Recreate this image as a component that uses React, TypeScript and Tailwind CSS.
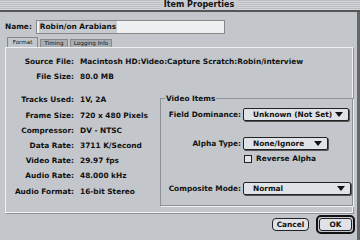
import React from "react";

const Popup: React.FC<{ value: string; w: string }> = ({ value, w }) => (
  <div
    className={`${w} h-[13px] flex items-center justify-between whitespace-nowrap bg-[#dfe2e6] border border-[#222] rounded-[2px] shadow-[1px_1px_0_#555] pl-[9px] pr-[5px]`}
  >
    <span>{value}</span>
    <svg width="8" height="5" viewBox="0 0 8 5">
      <path d="M0 0 L8 0 L4 5 Z" fill="#111" />
    </svg>
  </div>
);

const Row: React.FC<{ label: string; value: string; mt?: string }> = ({ label, value, mt }) => (
  <div className={`flex items-center h-[15.2px] whitespace-nowrap ${mt ?? ""}`}>
    <div className="w-[68px] text-right">{label}</div>
    <div className="ml-[6px]">{value}</div>
  </div>
);

const App: React.FC = () => {
  return (
    <div
      className="w-[360px] h-[240px] bg-[#c3c7cc] text-[#111] text-[7.4px] font-bold overflow-hidden relative"
      style={{ fontFamily: '"DejaVu Sans", "Liberation Sans", sans-serif' }}
    >
      {/* title bar */}
      <div className="h-[12px] flex items-center justify-center pl-[38px] bg-[repeating-linear-gradient(#b9bdc2_0px,#b9bdc2_1px,#d3d6da_1px,#d3d6da_2px)] border-b-2 border-[#555]">
        <span className="bg-[#c8ccd0] px-[4px] text-[8px] leading-[10px]">Item Properties</span>
      </div>

      <div className="flex h-[228px] border-r-[3px] border-[#666]">
        <div className="flex-1 flex flex-col">
          {/* name */}
          <div className="flex items-center mt-[8px] ml-[5px]">
            <span>Name:</span>
            <div className="ml-[4px] w-[189px] h-[14px] bg-[#eef0f2] border border-[#888] flex items-center pl-[2px]">
              <span className="bg-[#c7cbd0] px-[1px]">Robin/on Arabians</span>
            </div>
          </div>

          {/* tabs */}
          <div className="flex items-end mt-[3px] ml-[7px] h-[10px] font-normal text-[5.6px]">
            <div className="h-[10px] w-[31px] bg-[#c3c7cc] border border-b-0 border-[#888] flex items-center justify-center">Format</div>
            <div className="h-[8px] w-[28px] ml-[2px] bg-[#a9adb2] border border-b-0 border-[#888] flex items-center justify-center">Timing</div>
            <div className="h-[8px] w-[42px] ml-[2px] bg-[#a9adb2] border border-b-0 border-[#888] flex items-center justify-center">Logging Info</div>
          </div>

          {/* panel */}
          <div className="ml-[5px] mr-[3px] h-[167px] border border-[#8e9298] border-t-[#eef0f2] border-l-[#eef0f2] shadow-[inset_-1px_-1px_0_#f0f2f4] flex">
            <div className="flex flex-col pt-[6px]">
              <Row label="Source File:" value="Macintosh HD:Video:Capture Scratch:Robin/interview" />
              <Row label="File Size:" value="80.0 MB" />
              <Row label="Tracks Used:" value="1V, 2A" mt="mt-[8px]" />
              <Row label="Frame Size:" value="720 x 480 Pixels" />
              <Row label="Compressor:" value="DV - NTSC" />
              <Row label="Data Rate:" value="3711 K/Second" />
              <Row label="Video Rate:" value="29.97 fps" />
              <Row label="Audio Rate:" value="48.000 kHz" />
              <Row label="Audio Format:" value="16-bit Stereo" />
            </div>
          </div>
        </div>
      </div>

      {/* video items group */}
      <div className="absolute left-[160px] top-[98px] w-[193px] h-[108px] border border-[#8e9298] shadow-[1px_1px_0_#eef0f2] whitespace-nowrap">
        <span className="absolute left-[4px] -top-[6px] bg-[#c3c7cc] px-[1px]">Video Items</span>
        <div className="flex items-center mt-[9px]">
          <div className="w-[80px] text-right">Field Dominance:</div>
          <div className="ml-[2px]"><Popup value="Unknown (Not Set)" w="w-[106px]" /></div>
        </div>
        <div className="flex items-center mt-[16px]">
          <div className="w-[80px] text-right">Alpha Type:</div>
          <div className="ml-[2px]"><Popup value="None/Ignore" w="w-[85px]" /></div>
        </div>
        <div className="flex items-center mt-[3px] ml-[83px]">
          <div className="w-[8px] h-[8px] border border-[#222] bg-[#dfe2e6]" />
          <span className="ml-[4px]">Reverse Alpha</span>
        </div>
        <div className="flex items-center mt-[18px]">
          <div className="w-[80px] text-right">Composite Mode:</div>
          <div className="ml-[2px]"><Popup value="Normal" w="w-[108px]" /></div>
        </div>
      </div>

      {/* buttons */}
      <div className="absolute right-[5px] top-[215px] flex items-center gap-[7px]">
        <div className="w-[37px] h-[13px] rounded-[4px] border border-[#222] bg-[#dfe2e6] flex items-center justify-center">Cancel</div>
        <div className="w-[39px] h-[19px] rounded-[5px] border-[2px] border-[#111] p-[1px]">
          <div className="w-full h-full rounded-[3px] border border-[#222] bg-[#dfe2e6] flex items-center justify-center">OK</div>
        </div>
      </div>
    </div>
  );
};

export default App;
